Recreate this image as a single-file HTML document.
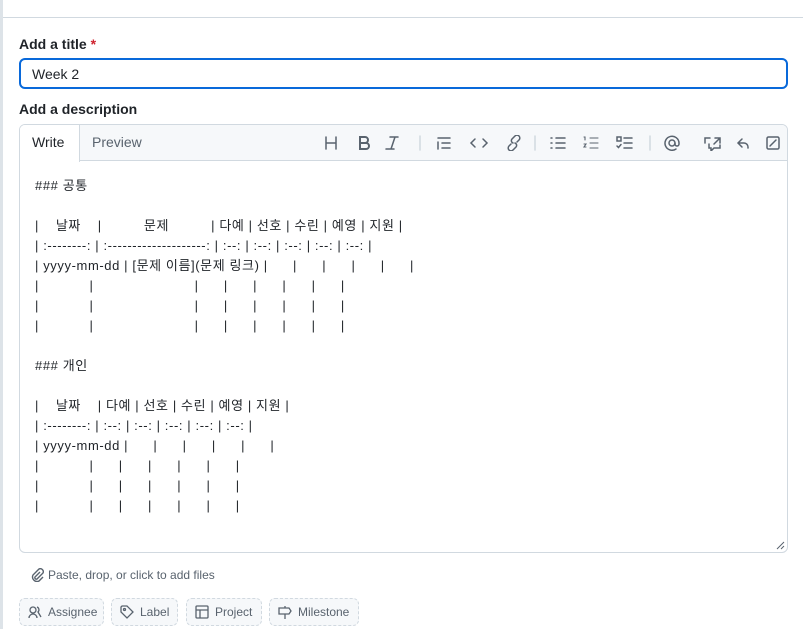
<!DOCTYPE html>
<html><head><meta charset="utf-8"><style>
*{box-sizing:border-box;margin:0;padding:0}
body{width:803px;height:629px;overflow:hidden;background:#fff;font-family:"Liberation Sans","Noto Sans CJK KR",sans-serif;color:#1f2328;position:relative}
.strip{position:absolute;left:0;top:0;width:3px;height:629px;background:#dde3e8}
.hdr{position:absolute;left:3px;top:17px;right:0;height:1px;background:#d1d9e0}
.lbl{position:absolute;left:19px;font-size:14px;font-weight:bold}
.inp{position:absolute;left:19px;top:58px;width:769px;height:31px;border:2px solid #0969da;border-radius:6px;font-size:14px;padding:6px 11px}
.ed{position:absolute;left:19px;top:124px;width:769px;height:429px;border:1px solid #d1d9e0;border-radius:6px;overflow:hidden}
.tb{height:36px;background:#f6f8fa;border-bottom:1px solid #d1d9e0;position:relative}
.tab{position:absolute;top:0;height:36px;font-size:14px;line-height:35px;padding:0 12px;color:#59636e}
.tab.a{left:0;width:60px;background:#fff;color:#1f2328;border-right:1px solid #d1d9e0;height:37px}
.ic{position:absolute;top:10px}
.ta{position:absolute;left:15px;top:51px;font-size:13px;letter-spacing:0.6px;line-height:20px;white-space:pre;color:#1f2328}
.btn{position:absolute;top:598px;height:28px;border:1px dashed #d1d9e0;border-radius:6px;background:#f6f8fa;font-size:12px;color:#59636e;line-height:26px;padding-left:28px}
.btn svg{position:absolute;left:8px;top:6px}
</style></head><body>
<div class="strip"></div><div class="hdr"></div>
<div class="lbl" style="top:36px">Add a title <span style="color:#cf222e">*</span></div>
<div class="inp">Week 2</div>
<div class="lbl" style="top:101px">Add a description</div>
<div class="ed">
<div class="tb">
<div class="tab a">Write</div><div class="tab" style="left:60px">Preview</div>
<svg class="ic" style="left:300px" width="460" height="16" viewBox="0 0 460 16" fill="none" stroke="#59636e" stroke-width="1.5" stroke-linecap="round">
<path d="M6 2v12M16 2v12M6 8h10"/>
<path d="M40 2h5a3 3 0 0 1 0 6h-5zM40 8h6a3 3 0 0 1 0 6h-6z" stroke-width="2"/>
<path d="M70 2h8M66 14h8M75 2l-4 12"/>
<path d="M100 1v14" stroke="#d1d9e0"/>
<path d="M118 3h12M122 8h8M122 13h8M118 7v7"/>
<path d="M155 4l-4 4 4 4M163 4l4 4-4 4"/>
<path d="M191 9l-2 2a2.5 2.5 0 0 0 4 4l3-3a2.5 2.5 0 0 0-1-4M197 7l2-2a2.5 2.5 0 0 0-4-4l-3 3a2.5 2.5 0 0 0 1 4"/>
<path d="M215 1v14" stroke="#d1d9e0"/>
<path d="M236 3h9M236 8h9M236 13h9M231 3h1M231 8h1M231 13h1"/>
<path d="M270 3h8M270 8h8M270 13h8M264 2h1v3M264 9h2l-2 3h2" stroke-width="1.1"/>
<path d="M304 3h8M304 8h8M304 13h8M297 2h4v4h-4zM297 11l1.5 1.5 2.5-3"/>
<path d="M330 1v14" stroke="#d1d9e0"/>
<circle cx="352" cy="8" r="3"/><path d="M355 8v1a2 2 0 0 0 4 0v-1a7 7 0 1 0-3 6"/>
<path d="M385 8v-5h5M395 3h5v5M399 4l-5 5M400 10v3h-6l-3 3v-3h-2v-4"/>
<path d="M422 4l-4 4 4 4M418 8h6a4 4 0 0 1 4 4v1"/>
<rect x="447" y="2" width="12" height="12" rx="1.5"/><path d="M450 11l6-6"/>
</svg>
</div>
<div class="ta">### 공통

|    날짜    |          문제          | 다예 | 선호 | 수린 | 예영 | 지원 |
| :--------: | :--------------------: | :--: | :--: | :--: | :--: | :--: |
| yyyy-mm-dd | [문제 이름](문제 링크) |      |      |      |      |      |
|            |                        |      |      |      |      |      |
|            |                        |      |      |      |      |      |
|            |                        |      |      |      |      |      |

### 개인

|    날짜    | 다예 | 선호 | 수린 | 예영 | 지원 |
| :--------: | :--: | :--: | :--: | :--: | :--: |
| yyyy-mm-dd |      |      |      |      |      |
|            |      |      |      |      |      |
|            |      |      |      |      |      |
|            |      |      |      |      |      |</div>
<svg style="position:absolute;right:2px;bottom:2px" width="9" height="9" stroke="#59636e"><path d="M1 8L8 1M5 8l3-3"/></svg>
</div>
<div style="position:absolute;left:30px;top:568px;font-size:12px;color:#59636e;padding-left:18px">
<svg style="position:absolute;left:0;top:0" width="14" height="14" fill="none" stroke="#59636e" stroke-width="1.4"><path d="M10 4l-5 5a1.5 1.5 0 0 0 2 2l6-6a3 3 0 0 0-4-4L3 7a4.5 4.5 0 0 0 6 6l4-4"/></svg>
Paste, drop, or click to add files</div>
<div class="btn" style="left:19px;width:85px"><svg width="14" height="14" fill="none" stroke="#59636e" stroke-width="1.3"><circle cx="5" cy="5" r="3"/><path d="M1 13a4 4 0 0 1 8 0M9 2a3 3 0 0 1 1 5l3 5"/></svg>Assignee</div>
<div class="btn" style="left:111px;width:67px"><svg width="14" height="14" fill="none" stroke="#59636e" stroke-width="1.3"><path d="M1 2v5l6 6 6-6-6-6H2z"/><circle cx="4.5" cy="4.5" r="1"/></svg>Label</div>
<div class="btn" style="left:186px;width:76px"><svg width="14" height="14" fill="none" stroke="#59636e" stroke-width="1.3"><rect x="1" y="1" width="12" height="12" rx="1"/><path d="M1 5h12M5 5v8"/></svg>Project</div>
<div class="btn" style="left:269px;width:90px"><svg width="14" height="14" fill="none" stroke="#59636e" stroke-width="1.3"><path d="M7 1v2M7 9v5M1 3h10l2 3-2 3H1z"/></svg>Milestone</div>
</body></html>
